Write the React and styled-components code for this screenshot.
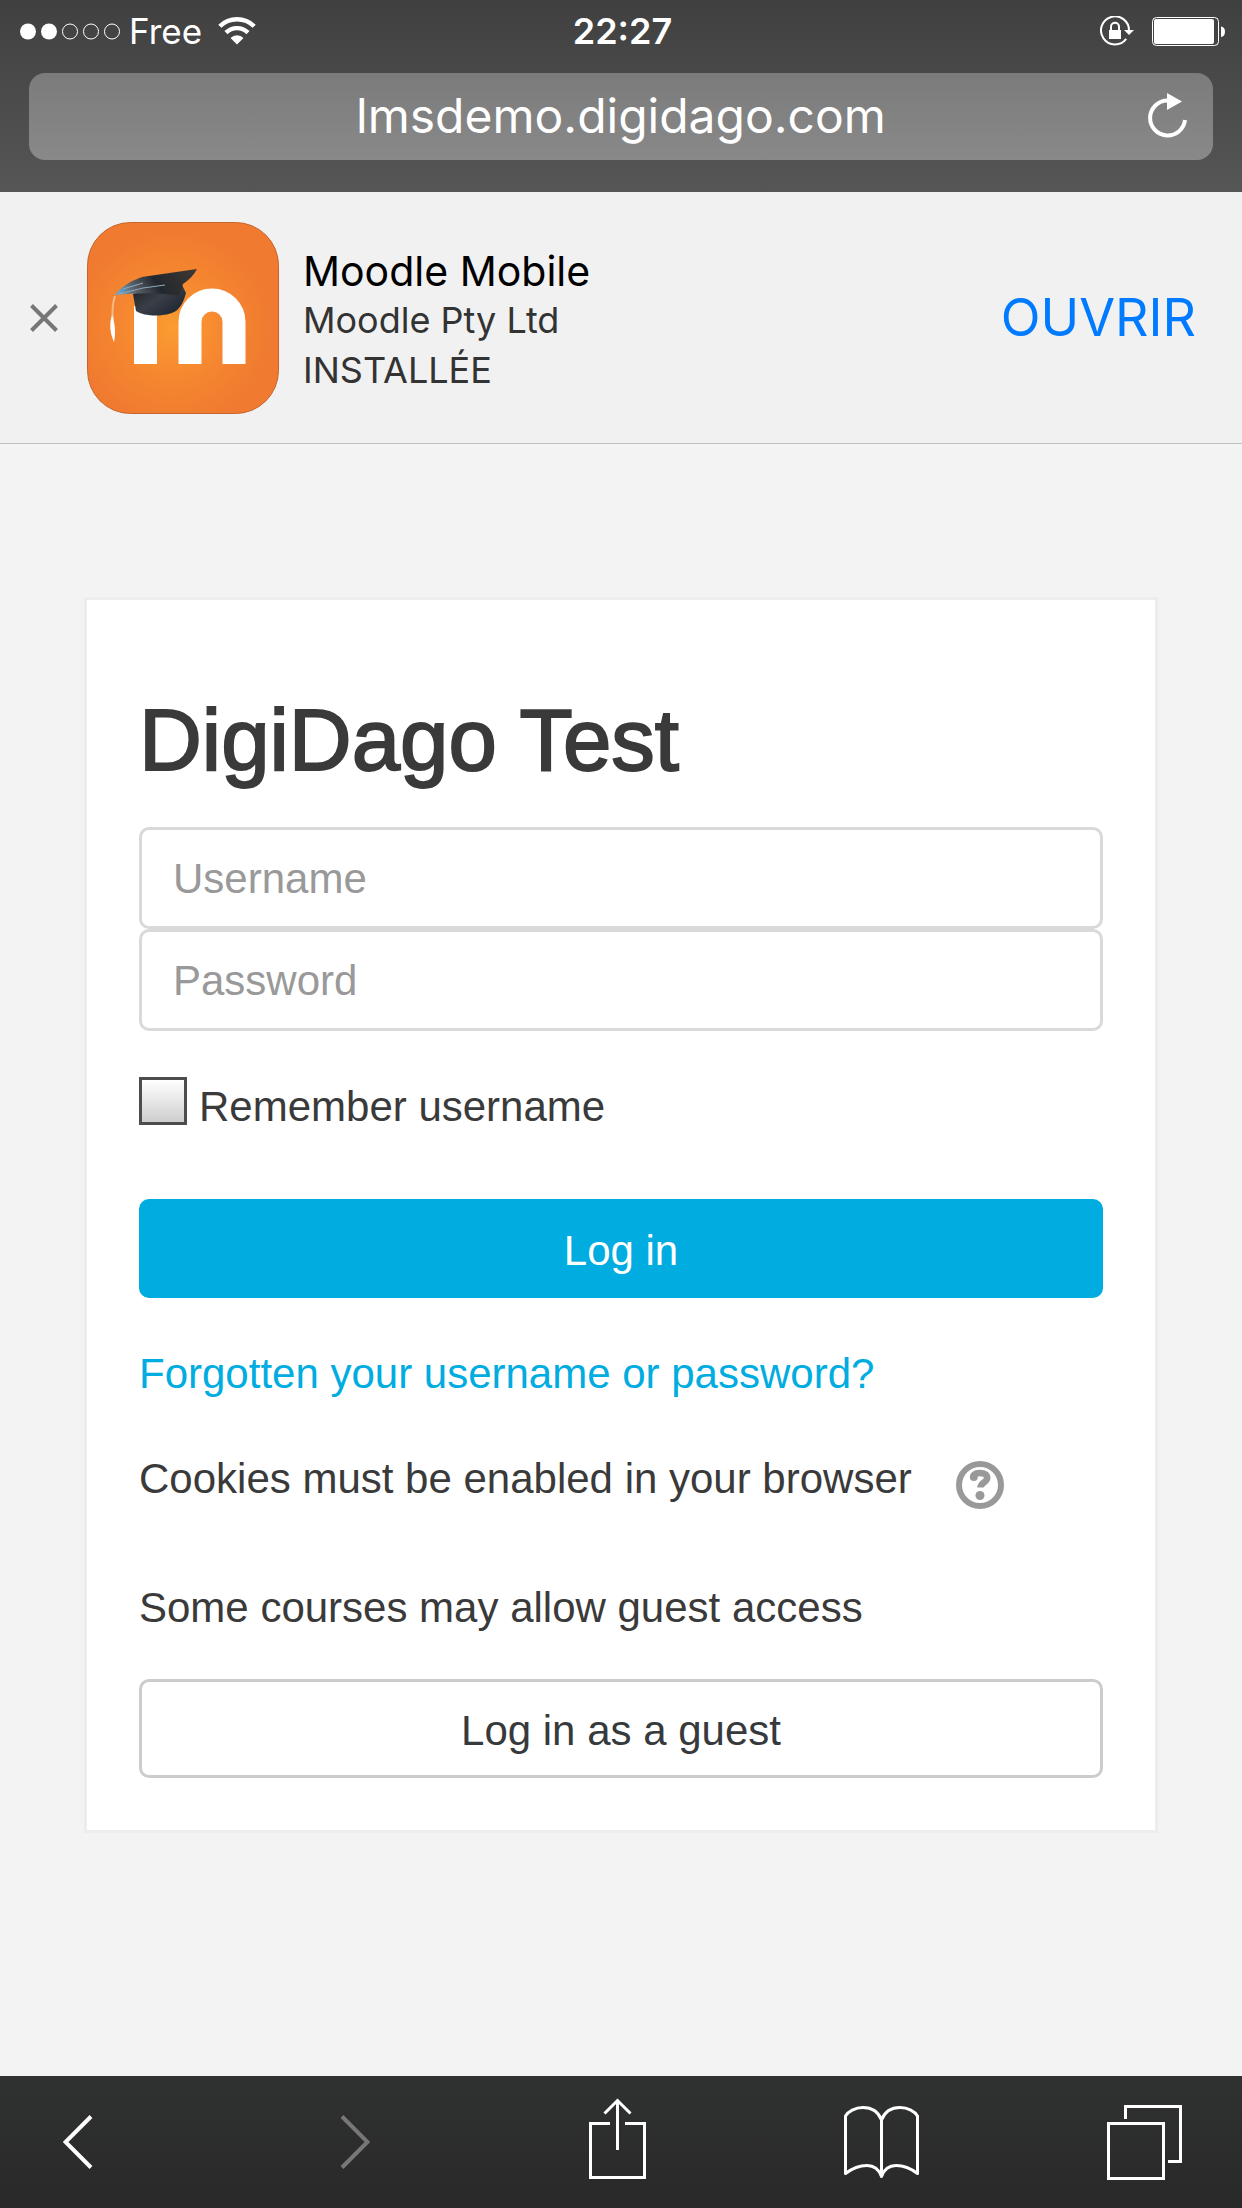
import React from 'react'
import styled, { createGlobalStyle } from 'styled-components'

const SystemFont = 'Inter, Roboto, sans-serif'
const SiteFont = '"Liberation Sans", Arial, sans-serif'

const GlobalStyle = createGlobalStyle`
  *, *::before, *::after {
    box-sizing: border-box;
  }

  body {
    margin: 0;
    background: #f3f3f3;
    font-family: ${SiteFont};
  }

  button, input {
    font: inherit;
    margin: 0;
  }

  svg {
    display: block;
    flex: none;
  }
`

const Page = styled.div`
  display: flex;
  flex-direction: column;
  min-height: 100vh;
`

/* Browser top */

const BrowserHeader = styled.header`
  padding: 0 29px 32px;
  background: linear-gradient(#404040, #565656);
  color: #fff;
  font-family: ${SystemFont};
`

const StatusBar = styled.div`
  display: grid;
  grid-template-columns: 1fr auto 1fr;
  align-items: center;
  height: 73px;
  margin: 0 -12px 0 -9px;
  padding-bottom: 11px;
  font-size: 35px;
  line-height: 44px;
`

const StatusGroup = styled.div`
  display: flex;
  align-items: center;
  justify-content: ${({ end }) => (end ? 'flex-end' : 'flex-start')};
  gap: ${({ end }) => (end ? '18px' : '16px')};
`

const Carrier = styled.span`
  display: flex;
  align-items: center;
  gap: 8px;
`

const Clock = styled.time`
  font-size: 36px;
  font-weight: 600;
`

const AddressBar = styled.div`
  display: grid;
  grid-template-columns: 64px 1fr 64px;
  align-items: center;
  height: 87px;
  padding-bottom: 2px;
  border-radius: 16px;
  background: linear-gradient(#7b7b7b, #898989);
`

const Address = styled.span`
  grid-column: 2;
  font-size: 48px;
  line-height: 60px;
  text-align: center;
`

const IconButton = styled.button`
  display: flex;
  align-items: center;
  justify-content: ${({ start }) => (start ? 'flex-start' : 'center')};
  width: ${({ width }) => width || 75}px;
  padding: 0;
  border: 0;
  background: none;
  color: ${({ muted }) => (muted ? '#777' : '#fff')};
`

/* App banner */

const AppBanner = styled.aside`
  display: flex;
  align-items: center;
  padding: 30px 46px 29px 29px;
  border-bottom: 1px solid #bfbfbf;
  background: #f1f1f1;
  font-family: ${SystemFont};
`

const AppInfo = styled.div`
  flex: 1;
  margin: 0 24px;
  padding-top: 5px;
`

const AppName = styled.div`
  color: #000;
  font-size: 41px;
  line-height: 48px;
`

const AppDetail = styled.div`
  color: #333;
  font-size: 36px;
  line-height: 50px;
`

const OpenLink = styled.a`
  color: #007aff;
  font-size: 52px;
  line-height: 60px;
  text-decoration: none;
`

/* Login card */

const Main = styled.main`
  flex: 1;
  padding: 153px 84px;
`

const Card = styled.form`
  display: flex;
  flex-direction: column;
  padding: 92px 52px 52px;
  border: 3px solid #ededed;
  background: #fff;
  color: #3a3a3a;
  font-size: 42px;
  line-height: 60px;
`

const Title = styled.h1`
  margin: 0 0 39px;
  font-size: 87px;
  font-weight: 400;
  line-height: 96px;
  -webkit-text-stroke: 2px #3a3a3a;
`

const TextField = styled.input`
  width: 100%;
  height: 102px;
  padding: 2px 31px 0;
  border: 3px solid #d9d9d9;
  border-radius: 10px;
  background: #fff;
  color: #3a3a3a;
  outline: none;

  &::placeholder {
    color: #999;
    opacity: 1;
  }
`

const RememberRow = styled.div`
  display: flex;
  gap: 12px;
  margin: 46px 0 62px;
`

const CheckBox = styled.input`
  appearance: none;
  flex: none;
  width: 48px;
  height: 48px;
  border: 3px solid #4d4d4d;
  background: linear-gradient(#fff, #cecece);
`

const Button = styled.button`
  padding: 19px 30px 14px;
  border: 3px solid ${({ primary }) => (primary ? '#01ace1' : '#ccc')};
  border-radius: 10px;
  background: ${({ primary }) => (primary ? '#01ace1' : '#fff')};
  color: ${({ primary }) => (primary ? '#fff' : '#373a3c')};
  line-height: 60px;
`

const ForgottenLink = styled.a`
  margin: 46px 0 45px;
  color: #01ace1;
  text-decoration: none;
`

const CookieRow = styled.div`
  display: flex;
  align-items: flex-end;
  gap: 44px;
`

const GuestText = styled.p`
  margin: 69px 0 41px;
`

/* Browser bottom */

const Toolbar = styled.nav`
  display: flex;
  align-items: center;
  justify-content: space-between;
  height: 132px;
  padding: 0 60px 0 40px;
  background: linear-gradient(#303131, #292929);
`

const HistoryButtons = styled.div`
  display: flex;
  gap: 202px;
`

const SignalDots = () => (
  <svg width="101" height="17" viewBox="0 0 101 17" fill="none" stroke="#fff">
    <circle cx="8" cy="8.5" r="8" fill="#fff" stroke="none" />
    <circle cx="29" cy="8.5" r="8" fill="#fff" stroke="none" />
    <circle cx="50" cy="8.5" r="7.5" />
    <circle cx="71" cy="8.5" r="7.5" />
    <circle cx="92" cy="8.5" r="7.5" />
  </svg>
)

const WifiIcon = () => (
  <svg width="38" height="28" viewBox="0 0 38 28" fill="none" stroke="#fff" strokeWidth="4.4">
    <path d="M1.8 9.3a24.5 24.5 0 0 1 34.4 0" />
    <path d="M8 15.6a15.7 15.7 0 0 1 22 0" />
    <path d="M19 27.5l-6.5-6.6a9.2 9.2 0 0 1 13 0z" fill="#fff" stroke="none" />
  </svg>
)

const RotationLockIcon = () => (
  <svg width="34" height="30" viewBox="0 0 34 30" fill="none" stroke="#fff">
    <path d="M26.2 22.8A14 14 0 1 1 29 15" strokeWidth="2" />
    <path d="M24 14h10l-5 5z" fill="#fff" stroke="none" />
    <path d="M9 14h12v9H9z" fill="#fff" stroke="none" />
    <path d="M11 14v-3.3a4 4 0 0 1 8 0V14" strokeWidth="2" />
  </svg>
)

const BatteryIcon = () => (
  <svg width="73" height="29" viewBox="0 0 73 29" fill="#fff">
    <rect x="0.5" y="0.5" width="66" height="28" rx="4" fill="none" stroke="#fff" />
    <rect x="2" y="2" width="60" height="25" rx="2" />
    <path d="M69 9.5c2.5 0 4 2.2 4 5.2s-1.5 5.2-4 5.2z" />
  </svg>
)

const ReloadIcon = () => (
  <svg width="40" height="46" viewBox="0 0 40 46" fill="none" stroke="#fff" strokeWidth="4">
    <path d="M19.5 7.5A17.5 17.5 0 1 0 37 27" />
    <path d="M19 0l15 8.5-15 8.5z" fill="#fff" stroke="none" />
  </svg>
)

const CloseIcon = () => (
  <svg width="30" height="28" viewBox="0 0 30 28" fill="none" stroke="#777" strokeWidth="4">
    <path d="M2.5 1.5l25 25M27.5 1.5l-25 25" />
  </svg>
)

const MoodleIcon = () => (
  <svg width="192" height="192" viewBox="0 0 192 192" fill="none">
    <defs>
      <radialGradient id="orange" cx="0.45" cy="0.55" r="0.52">
        <stop offset="0" stopColor="#fb9c30" />
        <stop offset="0.55" stopColor="#f58630" />
        <stop offset="1" stopColor="#f07a30" />
      </radialGradient>
      <linearGradient id="cap" x1="0" y1="0.6" x2="1" y2="0.4">
        <stop offset="0" stopColor="#67a5cf" />
        <stop offset="0.2" stopColor="#5b6168" />
        <stop offset="0.5" stopColor="#22272d" />
        <stop offset="1" stopColor="#3c3633" />
      </linearGradient>
      <linearGradient id="skull" x1="0" y1="0" x2="1" y2="1">
        <stop offset="0" stopColor="#15191d" />
        <stop offset="0.5" stopColor="#3a3e46" />
        <stop offset="1" stopColor="#17202b" />
      </linearGradient>
    </defs>
    <rect x="0.5" y="0.5" width="191" height="191" rx="43" fill="url(#orange)" stroke="#c5662c" />
    <path d="M58.5 142V84M103 142V100a22 22 0 0 1 44 0v42" stroke="#fff" strokeWidth="23" />
    <path d="M28 74c-3 9-3 16-2 24" stroke="#f6b98a" strokeWidth="2" />
    <path d="M25 93c-3 9-2 18 2 27 2-9 1-19-2-27z" fill="#fff" />
    <path d="M46 72l3 17c9 6 30 6 40 0 6-5 8-11 10-18l-7-14z" fill="url(#skull)" />
    <path d="M28 73c5-7 15-14 27-18l55-8c-3 6-8 11-14 15l-4 12c-20-4-44-3-64-1z" fill="url(#cap)" />
    <path d="M32 72l24-6 22-3M36 67l20-6" stroke="#8fa9bd" />
  </svg>
)

const HelpIcon = () => (
  <svg width="48" height="48" viewBox="0 0 48 48" fill="none" stroke="#999">
    <circle cx="24" cy="24" r="21" strokeWidth="6" />
    <path d="M17 15c1.5-2.2 4-3 7-3 4.5 0 7.2 1.8 7.2 5 0 4.2-6.7 4.5-6.7 9.5" strokeWidth="6.5" />
    <circle cx="17.8" cy="16" r="4" fill="#999" stroke="none" />
    <circle cx="24" cy="34.5" r="4.5" fill="#999" stroke="none" />
  </svg>
)

const ChevronIcon = ({ forward }) => (
  <svg width="30" height="54" viewBox="0 0 30 54" fill="none" stroke="currentColor" strokeWidth="4">
    <path d={forward ? 'M2 1.5L27.5 27 2 52.5' : 'M28 1.5L2.5 27 28 52.5'} />
  </svg>
)

const ShareIcon = () => (
  <svg width="57" height="88" viewBox="0 0 57 88" fill="none" stroke="currentColor" strokeWidth="3">
    <path d="M21 25.5H1.5v54h54v-54H36M28.5 52V3M15.5 15.5l13-13 13 13" />
  </svg>
)

const BookIcon = () => (
  <svg
    width="75"
    height="72"
    viewBox="0 0 75 72"
    fill="none"
    stroke="currentColor"
    strokeWidth="3"
    strokeLinejoin="round"
  >
    <path d="M37.5 14C34 5 27 1.5 19 1.5S4 5.5 1.5 10v57.5C10 61 17 59.5 23 59.5c7 0 12 4 14.5 11 2.5-7 7.5-11 14.5-11 6 0 13 1.5 21.5 8V10C71 5.5 64 1.5 56 1.5S41 5 37.5 14zV70" />
  </svg>
)

const TabsIcon = () => (
  <svg width="75" height="75" viewBox="0 0 75 75" fill="none" stroke="currentColor" strokeWidth="3">
    <path d="M1.5 18.5h55v55h-55zM18.5 14V1.5h55v55H61" />
  </svg>
)

const App = () => {
  return (
    <>
      <GlobalStyle />
      <Page>
        <BrowserHeader>
          <StatusBar>
            <StatusGroup>
              <Carrier>
                <SignalDots />
                Free
              </Carrier>
              <WifiIcon />
            </StatusGroup>
            <Clock>22:27</Clock>
            <StatusGroup end>
              <RotationLockIcon />
              <BatteryIcon />
            </StatusGroup>
          </StatusBar>
          <AddressBar>
            <Address>lmsdemo.digidago.com</Address>
            <IconButton type="button" width={38} aria-label="Reload">
              <ReloadIcon />
            </IconButton>
          </AddressBar>
        </BrowserHeader>

        <AppBanner>
          <IconButton type="button" width={58} start aria-label="Close">
            <CloseIcon />
          </IconButton>
          <MoodleIcon />
          <AppInfo>
            <AppName>Moodle Mobile</AppName>
            <AppDetail>Moodle Pty Ltd</AppDetail>
            <AppDetail>INSTALLÉE</AppDetail>
          </AppInfo>
          <OpenLink href="#open">OUVRIR</OpenLink>
        </AppBanner>

        <Main>
          <Card onSubmit={(event) => event.preventDefault()}>
            <Title>DigiDago Test</Title>
            <TextField type="text" name="username" placeholder="Username" aria-label="Username" />
            <TextField type="password" name="password" placeholder="Password" aria-label="Password" />
            <RememberRow>
              <CheckBox type="checkbox" id="remember" name="remember" />
              <label htmlFor="remember">Remember username</label>
            </RememberRow>
            <Button type="submit" primary>
              Log in
            </Button>
            <ForgottenLink href="#forgotten">Forgotten your username or password?</ForgottenLink>
            <CookieRow>
              <span>Cookies must be enabled in your browser</span>
              <IconButton type="button" width={48} aria-label="Help with cookies">
                <HelpIcon />
              </IconButton>
            </CookieRow>
            <GuestText>Some courses may allow guest access</GuestText>
            <Button type="button">Log in as a guest</Button>
          </Card>
        </Main>

        <Toolbar>
          <HistoryButtons>
            <IconButton type="button" aria-label="Back">
              <ChevronIcon />
            </IconButton>
            <IconButton type="button" aria-label="Forward" muted disabled>
              <ChevronIcon forward />
            </IconButton>
          </HistoryButtons>
          <IconButton type="button" aria-label="Share">
            <ShareIcon />
          </IconButton>
          <IconButton type="button" aria-label="Bookmarks">
            <BookIcon />
          </IconButton>
          <IconButton type="button" aria-label="Tabs">
            <TabsIcon />
          </IconButton>
        </Toolbar>
      </Page>
    </>
  )
}

export default App
